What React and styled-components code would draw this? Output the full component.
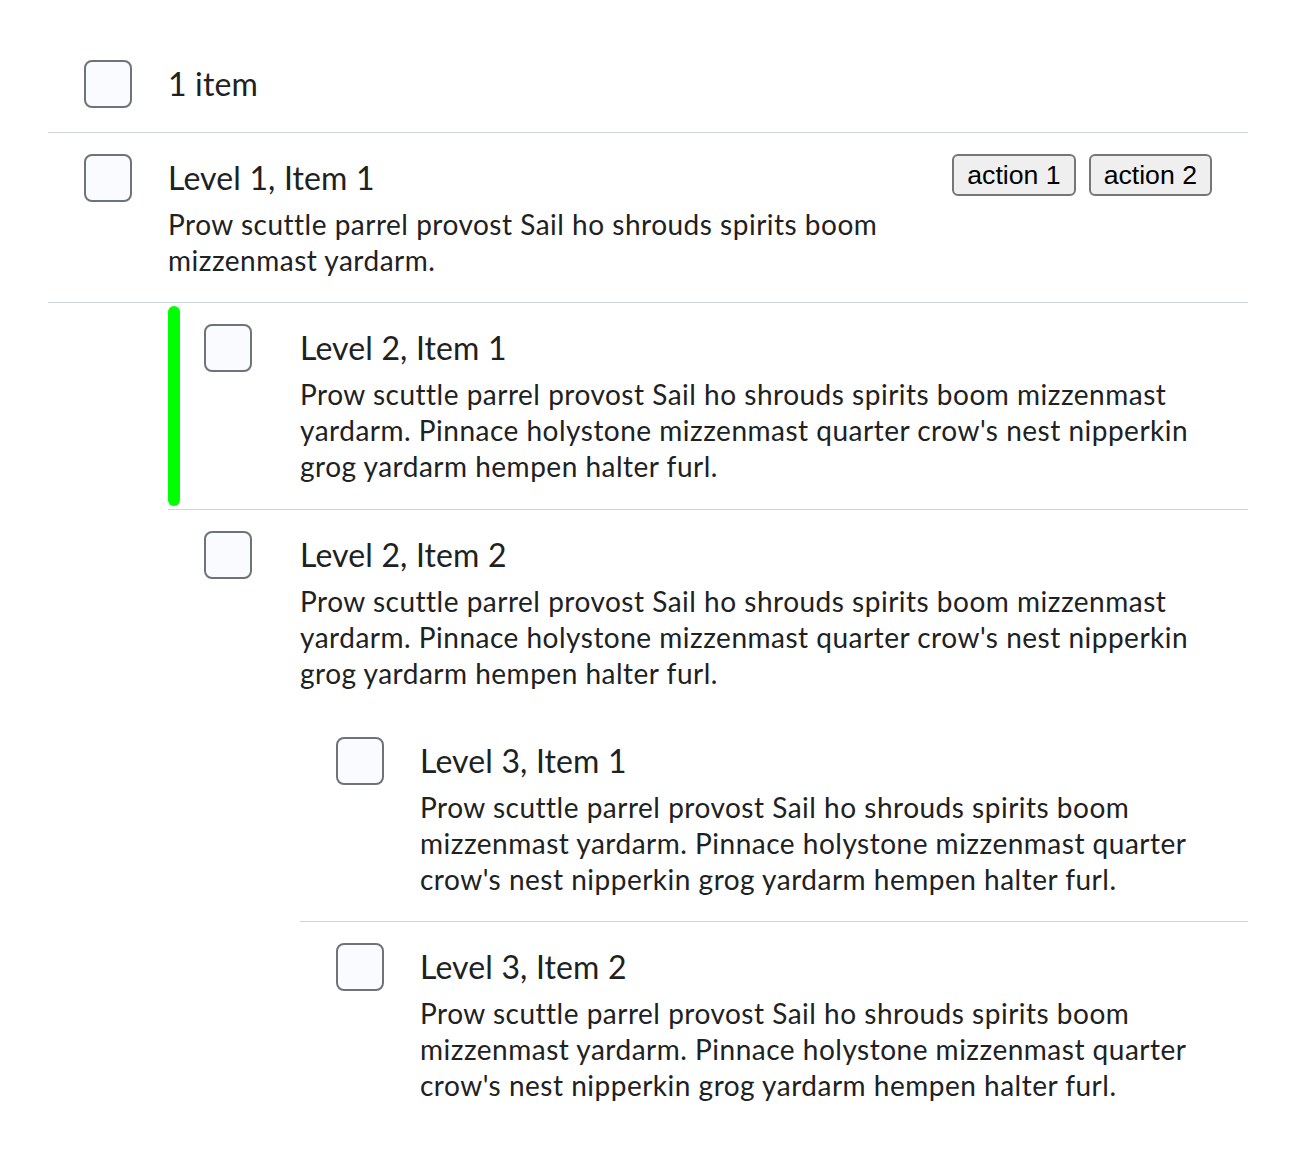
import React from "react";
import styled, { createGlobalStyle } from "styled-components";

const GlobalStyle = createGlobalStyle`
  html, body { margin: 0; padding: 0; background: #ffffff; }
  body { font-family: Lato, "Noto Sans", sans-serif; color: #202122; }
`;

const Page = styled.div`
  padding: 39px 48px 50px 48px;
`;

const List = styled.div`
  display: flex;
  flex-direction: column;
  margin-left: ${(p) => p.$indent || 0}px;
`;

const Row = styled.div`
  position: relative;
  display: flex;
  align-items: flex-start;
  padding: 21px 36px ${(p) => (p.$highlight ? 25 : 24)}px 36px;
  border-bottom: 1px solid ${(p) => (p.$separator ? "#cdd5dc" : "transparent")};
`;

const Highlight = styled.div`
  position: absolute;
  left: 0;
  top: 3px;
  bottom: 3px;
  width: 12px;
  border-radius: 6px;
  background: #00ff00;
`;

const Checkbox = styled.div`
  flex: 0 0 auto;
  box-sizing: border-box;
  width: 48px;
  height: 48px;
  border: 2px solid #6f7378;
  border-radius: 8px;
  background: #f9fbff;
  margin-right: ${(p) => p.$gap}px;
`;

const Content = styled.div`
  flex: 1 1 auto;
  min-width: 0;
  display: flex;
  flex-direction: column;
  gap: 4px;
`;

const Title = styled.div`
  font-size: 32px;
  line-height: 48px;
  letter-spacing: 0.15px;
  color: #202122;
`;

const Description = styled.div`
  font-size: 28px;
  line-height: 36px;
  letter-spacing: 0.5px;
  color: #202122;
`;

const Actions = styled.div`
  flex: 0 0 auto;
  display: flex;
  gap: 13px;
  margin-left: 36px;
`;

const ActionButton = styled.button`
  box-sizing: border-box;
  height: 42px;
  padding: 0 13px;
  border: 2px solid #767676;
  border-radius: 6px;
  background: #efefef;
  color: #000;
  font-family: "Liberation Sans", Arial, sans-serif;
  font-size: 26.67px;
  line-height: 30px;
`;

const LONG =
  "Prow scuttle parrel provost Sail ho shrouds spirits boom mizzenmast yardarm. Pinnace holystone mizzenmast quarter crow's nest nipperkin grog yardarm hempen halter furl.";
const SHORT = "Prow scuttle parrel provost Sail ho shrouds spirits boom mizzenmast yardarm.";

function Item({ title, description, gap = 36, separator, highlight, actions }) {
  return (
    <Row $separator={separator} $highlight={highlight}>
      {highlight && <Highlight />}
      <Checkbox $gap={gap} />
      <Content>
        <Title>{title}</Title>
        {description && <Description>{description}</Description>}
      </Content>
      {actions && (
        <Actions>
          {actions.map((a) => (
            <ActionButton key={a}>{a}</ActionButton>
          ))}
        </Actions>
      )}
    </Row>
  );
}

export default function App() {
  return (
    <>
      <GlobalStyle />
      <Page>
        <List>
          <Item title="1 item" separator gap={36} />
          <Item
            title="Level 1, Item 1"
            description={SHORT}
            separator
            gap={36}
            actions={["action 1", "action 2"]}
          />
          <List $indent={120}>
            <Item title="Level 2, Item 1" description={LONG} separator highlight gap={48} />
            <Item title="Level 2, Item 2" description={LONG} gap={48} />
            <List $indent={132}>
              <Item title="Level 3, Item 1" description={LONG} separator gap={36} />
              <Item title="Level 3, Item 2" description={LONG} gap={36} />
            </List>
          </List>
        </List>
      </Page>
    </>
  );
}
